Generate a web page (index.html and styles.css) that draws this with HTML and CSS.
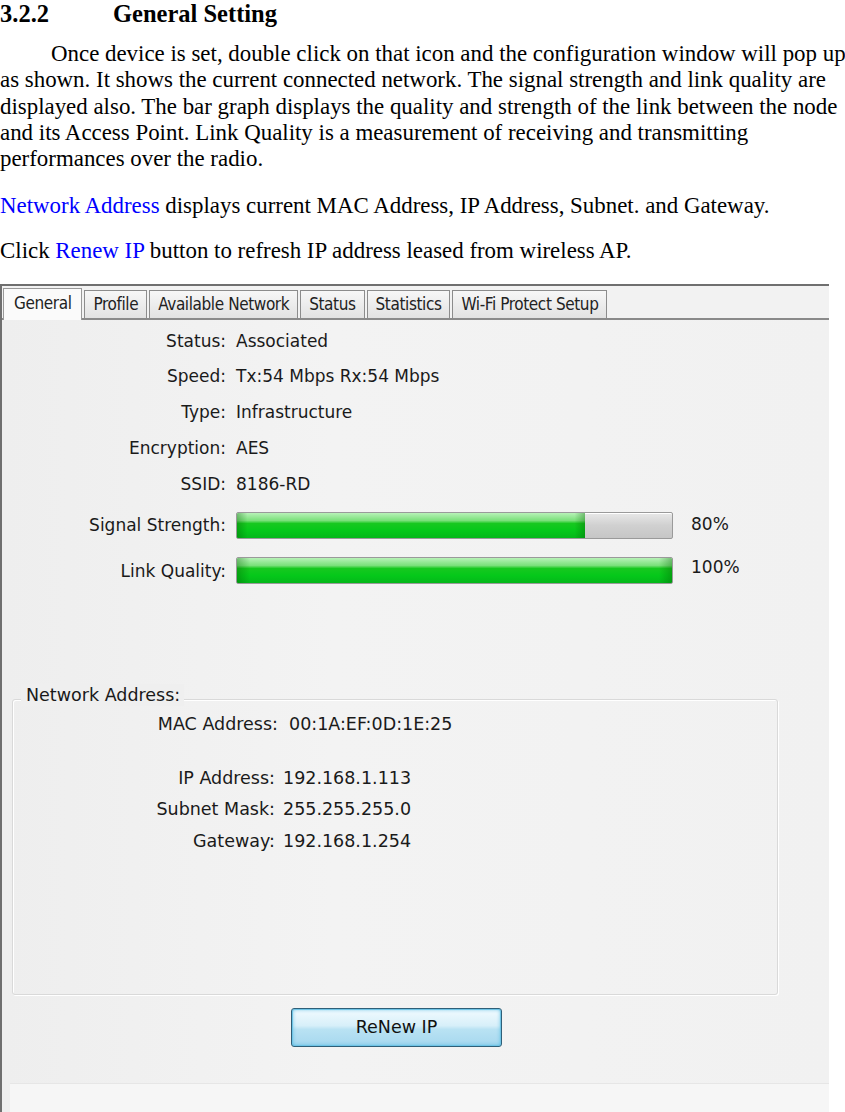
FILE: index.html
```html
<!DOCTYPE html>
<html>
<head>
<meta charset="utf-8">
<link rel="stylesheet" href="styles.css">
</head>
<body>
<h3 class="heading"><span class="num">3.2.2</span><span>General Setting</span></h3>
<p class="para indent">Once device is set, double click on that icon and the configuration window will pop up<br>as shown. It shows the current connected network. The signal strength and link quality are<br>displayed also. The bar graph displays the quality and strength of the link between the node<br>and its Access Point. Link Quality is a measurement of receiving and transmitting<br>performances over the radio.</p>
<p class="para p2"><span class="link">Network Address</span> displays current MAC Address, IP Address, Subnet. and Gateway.</p>
<p class="para p3">Click <span class="link">Renew IP</span> button to refresh IP address leased from wireless AP.</p>

<div class="window">
  <div class="tabs">
    <div class="tab active">General</div>
    <div class="tab">Profile</div>
    <div class="tab">Available Network</div>
    <div class="tab">Status</div>
    <div class="tab">Statistics</div>
    <div class="tab">Wi-Fi Protect Setup</div>
  </div>
  <div class="panel">
    <div class="info">
      <div class="lbl">Status:</div><div class="val">Associated</div>
      <div class="lbl">Speed:</div><div class="val">Tx:54 Mbps Rx:54 Mbps</div>
      <div class="lbl">Type:</div><div class="val">Infrastructure</div>
      <div class="lbl">Encryption:</div><div class="val">AES</div>
      <div class="lbl">SSID:</div><div class="val">8186-RD</div>
    </div>
    <div class="bars">
      <div class="bar-row">
        <div class="lbl">Signal Strength:</div>
        <div class="bar"><div class="fill" style="width:80%"></div></div>
        <div class="pct">80%</div>
      </div>
      <div class="bar-row">
        <div class="lbl">Link Quality:</div>
        <div class="bar"><div class="fill" style="width:100%"></div></div>
        <div class="pct pct-up">100%</div>
      </div>
    </div>
    <div class="group">
      <div class="legend">Network Address:</div>
      <div class="mac-row">
        <div class="mac-lbl">MAC Address:</div><div class="mac-val">00:1A:EF:0D:1E:25</div>
      </div>
      <div class="addr">
        <div class="alb">IP Address:</div><div class="aval">192.168.1.113</div>
        <div class="alb">Subnet Mask:</div><div class="aval">255.255.255.0</div>
        <div class="alb">Gateway:</div><div class="aval">192.168.1.254</div>
      </div>
    </div>
    <div class="btn-row"><div class="btn">ReNew IP</div></div>
    <div class="footer"></div>
  </div>
</div>
</body>
</html>
```
FILE: styles.css
```css
html, body {
  margin: 0;
  padding: 0;
  background: #ffffff;
  overflow: hidden;
}
body {
  width: 845px;
  height: 1112px;
  font-family: "Liberation Serif", "Times New Roman", serif;
  color: #000;
}
.heading {
  margin: 0;
  font-size: 24.5px;
  line-height: 27.5px;
  font-weight: bold;
  display: flex;
}
.heading .num {
  width: 113px;
}
.para {
  margin: 0;
  font-size: 22.9px;
  line-height: 26.25px;
  white-space: nowrap;
}
.indent {
  margin-top: 13.5px;
  text-indent: 51px;
}
.p2 { margin-top: 21px; }
.p3 { margin-top: 18px; }
.link { color: #0000ff; }

.window {
  margin-top: 20px;
  width: 827px;
  height: 827px;
  border-top: 2px solid #6f6f6f;
  border-left: 2px solid #6f6f6f;
  background: #f0f0f0;
  font-family: "DejaVu Sans", sans-serif;
  color: #1a1a1a;
  display: flex;
  flex-direction: column;
}
.tabs {
  display: flex;
  align-items: flex-end;
  height: 32px;
  padding-left: 1px;
  gap: 2px;
  border-bottom: 2px solid #8a8a8a;
  background: #f2f2f2;
  font-family: "DejaVu Sans Condensed", "DejaVu Sans", sans-serif;
}
.tab {
  height: 27px;
  line-height: 26px;
  padding: 0 8px;
  font-size: 17px;
  letter-spacing: -0.4px;
  border: 1px solid #8c8c8c;
  border-bottom: none;
  background: linear-gradient(#f7f7f7, #e2e2e2);
  color: #222;
}
.tab.active {
  height: 31px;
  line-height: 28px;
  background: #fafafa;
  margin-bottom: -2px;
  padding: 0 10px;
  border-color: #999;
}
.panel {
  flex: 1;
  position: relative;
  background: linear-gradient(90deg, #eeeeee, #f3f3f3 40%, #f1f1f1);
}
.info {
  display: grid;
  grid-template-columns: 224px auto;
  column-gap: 10px;
  grid-auto-rows: 35.75px;
  align-items: center;
  padding-top: 3px;
  font-size: 17px;
}
.lbl { text-align: right; }
.bars {
  margin-top: 10px;
  display: flex;
  flex-direction: column;
  gap: 18.5px;
  font-size: 17px;
}
.bar-row {
  display: flex;
  align-items: center;
  height: 27px;
  gap: 10px;
}
.bar-row .lbl { width: 224px; }
.bar {
  width: 435px;
  height: 25px;
  border: 1px solid #9a9a9a;
  border-radius: 2px;
  background: linear-gradient(#e8e8e8, #d0d0d0 50%, #c6c6c6);
  overflow: hidden;
  box-shadow: inset 0 1px 0 #fff;
}
.fill {
  height: 100%;
  background:
    linear-gradient(90deg, rgba(0,90,0,0.35), rgba(0,0,0,0) 3%, rgba(0,0,0,0) 97%, rgba(0,90,0,0.35)),
    linear-gradient(#b8f2b8 0%, #7ae07a 30%, #17c81f 42%, #05c81a 70%, #04b81a 100%);
}
.pct { padding-left: 8px; margin-top: -2px; }
.pct-up { margin-top: -8px; }

.group {
  position: relative;
  margin: 115px 0 0 10px;
  width: 764px;
  height: 294px;
  border: 1px solid #d9d9d9;
  box-shadow: 1px 1px 0 #ffffff inset, 1px 1px 0 #fff;
  border-radius: 3px;
  font-size: 17.5px;
}
.legend {
  position: absolute;
  top: -16px;
  left: 8px;
  padding: 0 4px 0 5px;
  background: #efefef;
  line-height: 22px;
}
.mac-row {
  display: flex;
  align-items: center;
  height: 24px;
  margin-top: 12px;
  gap: 11px;
}
.mac-lbl { width: 265px; text-align: right; }
.addr {
  display: grid;
  grid-template-columns: 262px auto;
  column-gap: 8px;
  grid-auto-rows: 31.5px;
  align-items: center;
  margin-top: 26px;
}
.alb { text-align: right; }
.btn-row {
  display: flex;
  padding-left: 289px;
  margin-top: 13px;
}
.btn {
  width: 209px;
  height: 37px;
  border: 1px solid #2f5f78;
  border-radius: 3px;
  background: linear-gradient(#f2fbff, #d7eff9 45%, #b9e2f3 55%, #a6d8ef);
  box-shadow: inset 0 0 0 1px #6fc4e6, inset 0 0 4px #49b6e0;
  text-align: center;
  line-height: 36px;
  font-size: 17.5px;
  color: #111;
}
.footer {
  position: absolute;
  left: 8px;
  right: 0;
  bottom: 0;
  height: 29px;
  background: #f6f6f6;
  border-top: 1px solid #e6e6e6;
}
```
